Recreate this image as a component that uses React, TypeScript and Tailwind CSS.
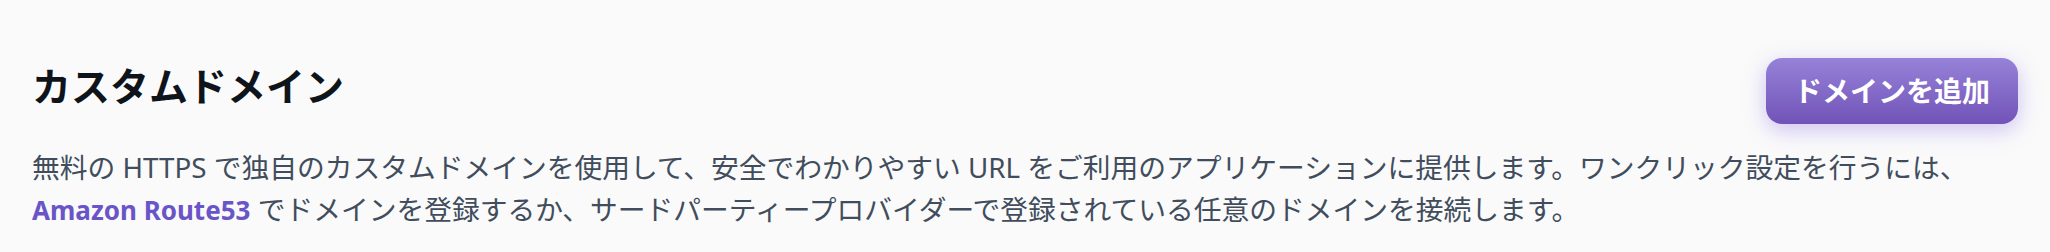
export default function App() {
  return (
    <div className="min-h-[252px] w-full bg-[#fafafa] px-8 font-['Noto_Sans','Noto_Sans_CJK_JP',sans-serif]">
      <div className="flex items-start justify-between pt-[58px]">
        <h2 className="mt-[2px] text-[39px] font-bold leading-[51px] text-[#0f141a]">
          カスタムドメイン
        </h2>
        <button className="h-[66px] rounded-2xl bg-gradient-to-b from-[#9682d8] to-[#7253b8] px-7 text-[28px] font-bold text-white shadow-[0_6px_22px_rgba(124,92,230,0.35)]">
          ドメインを追加
        </button>
      </div>
      <p className="mt-[22px] text-[27.75px] leading-[42px] text-[#414d5c]">
        無料の HTTPS で独自のカスタムドメインを使用して、安全でわかりやすい URL をご利用のアプリケーションに提供します。ワンクリック設定を行うには、
        <br />
        <a href="#" className="text-[26px] font-bold text-[#6a55c8]">
          Amazon Route53
        </a>{" "}
        でドメインを登録するか、サードパーティープロバイダーで登録されている任意のドメインを接続します。
      </p>
    </div>
  );
}
